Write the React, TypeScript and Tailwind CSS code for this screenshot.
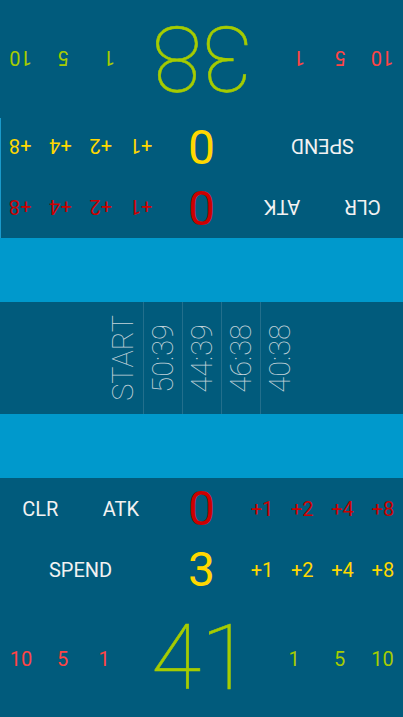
import React from "react";

type PanelProps = { life: number; atk: number; spend: number; className?: string };

function PlayerPanel({ life, atk, spend, className = "" }: PanelProps) {
  const steps = ["+1", "+2", "+4", "+8"];
  return (
    <div className={`flex flex-col bg-[#015b7c] ${className}`}>
      <div className="grid h-[61px] grid-cols-10 items-center">
        <div className="col-span-2 text-center text-[20px] leading-none text-[#f2f2f2]">CLR</div>
        <div className="col-span-2 text-center text-[20px] leading-none text-[#f2f2f2]">ATK</div>
        <div className="col-span-2 text-center text-[48px] leading-none text-[#cc0000]">{atk}</div>
        {steps.map((s) => (
          <div key={s} className="text-center text-[20px] leading-none text-[#cc0000]">
            {s}
          </div>
        ))}
      </div>
      <div className="grid h-[61px] grid-cols-10 items-center">
        <div className="col-span-4 text-center text-[20px] leading-none text-[#f2f2f2]">SPEND</div>
        <div className="col-span-2 text-center text-[48px] leading-none text-[#ffd800]">{spend}</div>
        {steps.map((s) => (
          <div key={s} className="text-center text-[20px] leading-none text-[#ffd800]">
            {s}
          </div>
        ))}
      </div>
      <div className="flex flex-1 items-center">
        <div className="flex items-center text-[20px] leading-none text-[#ff4444]">
          <div className="w-[42px] text-center">10</div>
          <div className="w-[41px] text-center">5</div>
          <div className="w-[42px] text-center">1</div>
        </div>
        <div className="flex-1 pl-[6px] text-center text-[91px] font-thin leading-none text-[#a6cc00] [-webkit-text-stroke:0.6px_#a6cc00]">
          {life}
        </div>
        <div className="flex items-center text-[20px] leading-none text-[#a6cc00]">
          <div className="w-[46px] text-center">1</div>
          <div className="w-[45px] text-center">5</div>
          <div className="w-[41px] text-center">10</div>
        </div>
      </div>
    </div>
  );
}

function VText({ children }: { children: React.ReactNode }) {
  return (
    <span className="rotate-180 text-[29px] font-thin leading-none text-[#c3d3da] [writing-mode:vertical-rl]">
      {children}
    </span>
  );
}

export default function App() {
  const times = ["50:39", "44:39", "46:38", "40:38"];
  return (
    <div className="relative flex h-[717px] w-full flex-col overflow-hidden bg-[#015b7c] font-['Roboto',sans-serif]">
      <PlayerPanel life={38} atk={0} spend={0} className="h-[238px] rotate-180" />
      <div className="absolute left-0 top-[118px] h-[120px] w-px bg-[#1a9acb]" />
      <div className="h-[64px] bg-[#0099cc]" />
      <div className="flex h-[112px] justify-center bg-[#015b7c]">
        <div className="flex w-[39px] items-center justify-center">
          <VText>START</VText>
        </div>
        {times.map((t) => (
          <div key={t} className="flex w-[39px] items-center justify-center border-l border-[#236f8c]">
            <VText>{t}</VText>
          </div>
        ))}
      </div>
      <div className="h-[64px] bg-[#0099cc]" />
      <PlayerPanel life={41} atk={0} spend={3} className="h-[239px]" />
    </div>
  );
}
